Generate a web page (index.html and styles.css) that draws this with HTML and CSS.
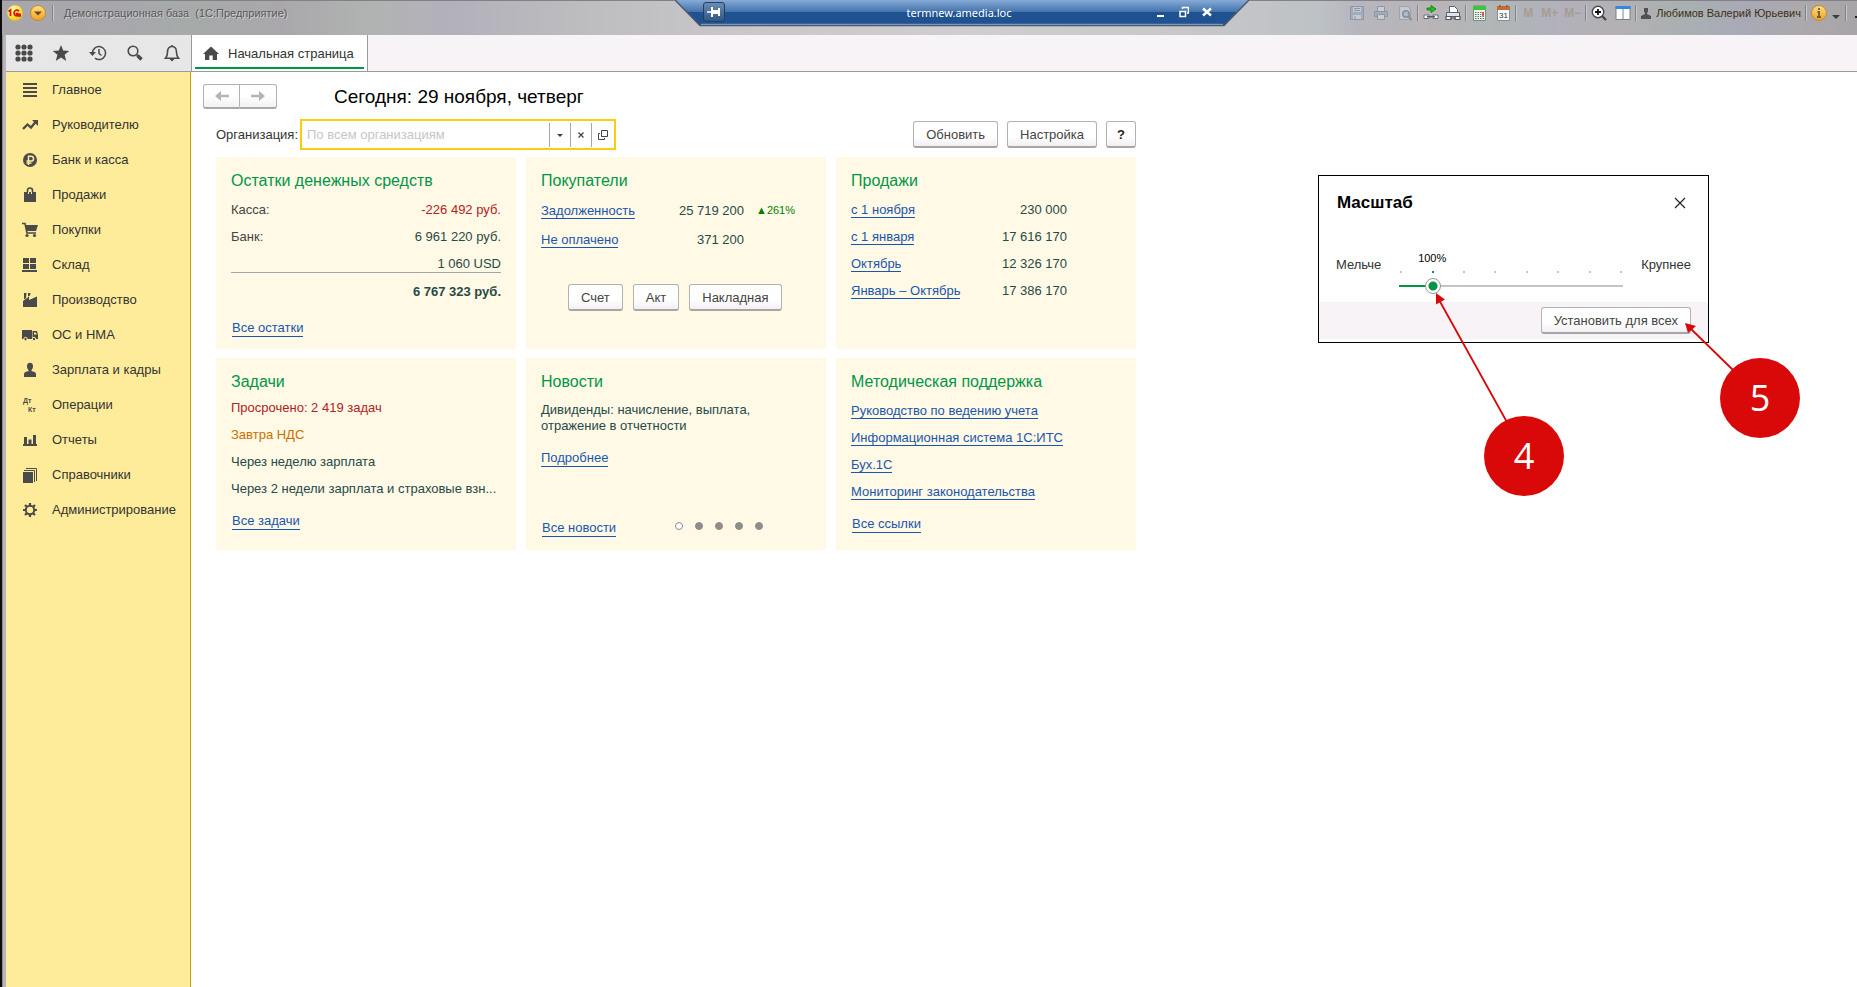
FILE: index.html
```html
<!DOCTYPE html>
<html lang="ru">
<head>
<meta charset="utf-8">
<title>Демонстрационная база (1С:Предприятие)</title>
<link rel="stylesheet" href="styles.css">
</head>
<body>
<div class="window">
  <header class="titlebar">
    <svg class="icon-16" viewBox="0 0 16 16"><defs><radialGradient id="gold" cx=".4" cy=".3" r=".8"><stop offset="0" stop-color="#fffbb0"/><stop offset=".6" stop-color="#ffe232"/><stop offset="1" stop-color="#e8b800"/></radialGradient><linearGradient id="amber" x2="0" y2="1"><stop offset="0" stop-color="#ffdf80"/><stop offset="1" stop-color="#f2a021"/></linearGradient></defs><circle cx="8" cy="8" r="7.7" fill="url(#gold)"/><path d="M1.5 6.5 3.5 5v6M12 6.2C10.500 4.300 7 5 7 8s2 3 7 3M11.500 8.500h-2v.8h4.500" fill="none" stroke="#d9160c" stroke-width="1.700"/></svg>
    <button class="bare menu-button" aria-label="Меню"><svg class="icon-16" viewBox="0 0 16 16"><circle cx="8" cy="8" r="7.500" fill="url(#amber)" stroke="#c58a2d"/><path d="M4 6.500h8L8 10.500z" fill="#6a4a1c"/></svg></button>
    <span class="separator"></span>
    <span class="app-title">Демонстрационная база&nbsp; (1С:Предприятие)</span>
    <div class="system-tools">
      <svg class="icon-16 faded" viewBox="0 0 16 16"><path d="M1.500 1.500h13v13h-13z" fill="#8fa3b7" stroke="#64798f"/><path d="M4 2h8v5H4z" fill="#d5dde5"/><path d="M4 10h8v4H4z" fill="#d5dde5"/><path d="M5 3.500h6M5 5.500h6M6 11v3" stroke="#64798f"/></svg>
      <svg class="icon-16 faded" viewBox="0 0 16 16"><path d="M4.500 6V1.500h7V6" fill="#dfe5ea" stroke="#64798f"/><path d="M1.500 6.500h13v5h-13z" fill="#8fa3b7" stroke="#64798f"/><path d="M4.500 9.500h7v5h-7z" fill="#dfe5ea" stroke="#64798f"/></svg>
      <svg class="icon-16 faded" viewBox="0 0 16 16"><path d="M2.500 1.500h8l3 3v10h-11z" fill="#d5dde5" stroke="#7f93a6"/><circle cx="9" cy="9" r="3.200" fill="#aebdcb" stroke="#4f6a84" stroke-width="1.500"/><path d="m11.500 11.500 3 3.500" stroke="#4f6a84" stroke-width="2"/></svg>
      <span class="separator"></span>
      <svg class="icon-16" viewBox="0 0 16 16"><path d="M4 3h4V.5L13 4 8 7.500V5H4z" fill="#20c512" stroke="#08780a" stroke-width=".8"/><path d="M1 10h5v3.500H1zM10 10h5v3.500h-5z" fill="#fff" stroke="#6a6f7a"/><path d="M4 11.700h8" stroke="#555a66" stroke-width="1.500"/></svg>
      <svg class="icon-16" viewBox="0 0 16 16"><path d="M4.500 9V1.500h5l3 3V9" fill="#fff" stroke="#596375"/><path d="M1.500 7.500h13v4h-13z" fill="#dfe3ea" stroke="#596375"/><path d="M1 11.500h5v3H1zM10 11.500h5v3h-5zM5 13h6" fill="#fff" stroke="#555a66" stroke-width="1.200"/></svg>
      <span class="separator"></span>
      <svg class="icon-16" viewBox="0 0 16 16"><path d="M2.500 1h12v14.500h-12z" fill="#edf2ed" stroke="#76917a"/><path d="M2 1h13v4H2z" fill="#3fc33f"/><path d="M4 7.500h9M4 9.500h9M4 11.500h9M4 13.500h9" stroke="#66786a" stroke-dasharray="1.500 1"/><path d="M12 7v4" stroke="#e33" stroke-width="1.500"/></svg>
      <svg class="icon-16 calendar" viewBox="0 0 16 16"><path d="M2.500 2h12v13.500h-12z" fill="#fafafa" stroke="#8c8c8c"/><path d="M2 1h13v4H2z" fill="#bf6d3b"/><path d="M5 0v2M12 0v2" stroke="#704026"/><text class="calendar-day" x="8.500" y="13" text-anchor="middle">31</text></svg>
      <span class="separator"></span>
      <span class="memory">M</span><span class="memory">M+</span><span class="memory">M−</span>
      <span class="separator"></span>
      <svg class="icon-16" viewBox="0 0 16 16"><circle cx="7" cy="7" r="5.700" fill="#fff" stroke="#484848" stroke-width="1.400"/><path d="M4 7h6M7 4v6" stroke="#111" stroke-width="1.800"/><path d="m11 11 4 4" stroke="#484848" stroke-width="2.400"/></svg>
      <svg class="icon-16 split" viewBox="0 0 16 16"><path d="M1 1.500h14v13H1z" fill="#fff" stroke="#77828e"/><path d="M.5 1h15v3H.5z" fill="#3389df"/><path d="M8 4v11" stroke="#77828e"/></svg>
      <span class="separator"></span>
      <svg class="icon-10" viewBox="0 0 10 12"><path d="M3 1h4v3.500L6 6v1l4 2v3H0V9l4-2V6L3 4.500z" fill="#515151"/></svg>
      <span class="user-name">Любимов Валерий Юрьевич</span>
      <span class="separator"></span>
      <svg class="icon-16" viewBox="0 0 16 16"><circle cx="8" cy="8" r="7.500" fill="url(#amber)" stroke="#b98a3c"/><path d="M8 3v2M6.500 7H8v5M6 12h4" fill="none" stroke="#6b5e4d" stroke-width="1.800"/></svg>
      <svg class="icon-10 drop" viewBox="0 0 10 12"><path d="M1 8h8L5 12z" fill="#3d3d3d"/></svg>
      <span class="separator"></span>
      <svg class="cut-dash" viewBox="0 0 2 16"><path d="M0 11h2v2H0z" fill="#222"/></svg>
    </div>
    <div class="remote-bar">
      <svg class="remote-shape" viewBox="0 0 574 27" preserveAspectRatio="none"><defs><linearGradient id="remote" x2="0" y2="1"><stop offset="0" stop-color="#86aad6"/><stop offset=".45" stop-color="#4474ad"/><stop offset=".46" stop-color="#205190"/><stop offset="1" stop-color="#205190"/></linearGradient></defs><path d="M0 0h574l-25 26H25z" fill="url(#remote)"/><path d="M0 0l25 25.500h524L574 0" fill="none" stroke="#4d596b" stroke-width="1.500"/><path d="M26 24.300h522" stroke="#8da9d0"/></svg>
      <button class="pin" aria-label="Закрепить"><svg class="pin-icon" viewBox="0 0 14 12"><path d="M0 6h5" stroke="#fff" stroke-width="1.500"/><path d="M5 1v10M12 2v8" stroke="#fff" stroke-width="2"/><path d="M5 6h7" stroke="#fff" stroke-width="4"/></svg></button>
      <span class="remote-host">termnew.amedia.loc</span>
      <div class="remote-controls">
        <button class="bare" aria-label="Свернуть"><svg class="icon-10" viewBox="0 0 10 12"><path d="M1 9h7v2H1z" fill="#fff"/></svg></button>
        <button class="bare" aria-label="Восстановить"><svg class="icon-10" viewBox="0 0 10 12"><path d="M1 5.500h5.500v5H1zM3.500 3V1.500h6v5.500H8" fill="none" stroke="#fff" stroke-width="1.500"/></svg></button>
        <button class="bare" aria-label="Закрыть"><svg class="icon-10" viewBox="0 0 10 12"><path d="m1 2.500 8 7M9 2.500l-8 7" stroke="#fff" stroke-width="2.400"/></svg></button>
      </div>
    </div>
  </header>

  <div class="toolbar">
    <div class="quick">
      <button class="bare" aria-label="Функции"><svg class="icon-18" viewBox="0 0 18 18"><g fill="#4a4a4a"><circle cx="3" cy="3" r="2.600"/><circle cx="9" cy="3" r="2.600"/><circle cx="15" cy="3" r="2.600"/><circle cx="3" cy="9" r="2.600"/><circle cx="9" cy="9" r="2.600"/><circle cx="15" cy="9" r="2.600"/><circle cx="3" cy="15" r="2.600"/><circle cx="9" cy="15" r="2.600"/><circle cx="15" cy="15" r="2.600"/></g></svg></button>
      <button class="bare" aria-label="Избранное"><svg class="icon-18" viewBox="0 0 18 18"><path d="m9 1 2.200 5.500 6 .4-4.600 3.900L14.200 17 9 13.600 3.800 17l1.600-6.200L.8 6.900l6-.4z" fill="#4a4a4a"/></svg></button>
      <button class="bare" aria-label="История"><svg class="icon-18" viewBox="0 0 18 18"><path d="M3.500 10.500V9A6.500 6.500 0 1 1 6 14.200" fill="none" stroke="#4a4a4a" stroke-width="1.500"/><path d="M0 8h7l-3.500 4z" fill="#4a4a4a"/><path d="M10 5v4.500l2.500 2" fill="none" stroke="#4a4a4a" stroke-width="1.500"/></svg></button>
      <button class="bare" aria-label="Поиск"><svg class="icon-18" viewBox="0 0 18 18"><circle cx="7" cy="7" r="4.800" fill="none" stroke="#4a4a4a" stroke-width="1.600"/><path d="m10.500 10.500 1.500 1.500" stroke="#4a4a4a" stroke-width="1.500"/><path d="m11.500 11.500 4 4" stroke="#4a4a4a" stroke-width="3.500"/></svg></button>
      <button class="bare" aria-label="Уведомления"><svg class="icon-18" viewBox="0 0 18 18"><path d="M2.500 14.200c2-2 2-3 2-6C4.500 4.500 6 2.500 9 2.500s4.500 2 4.500 5.700c0 3 0 4 2 6z" fill="none" stroke="#4a4a4a" stroke-width="1.600"/><path d="M7.500 2.500a1.500 1.500 0 0 1 3 0M6.500 15h5L9 17.500z" fill="#4a4a4a"/></svg></button>
    </div>
    <button class="tab"><svg class="icon-16" viewBox="0 0 16 16"><path d="M8 1.500 16 9h-2v6H9.700v-4.500H6.300V15H2V9H0z" fill="#4a4a4a"/></svg><span>Начальная страница</span></button>
  </div>

  <div class="workspace">
    <nav class="sidebar">
      <a class="nav-item" href="#"><svg class="icon-16" viewBox="0 0 16 16"><path d="M1 2h14M1 6h14M1 10h14M1 14h14" stroke="#4a4a4a" stroke-width="2"/></svg>Главное</a>
      <a class="nav-item" href="#"><svg class="icon-16" viewBox="0 0 16 16"><path d="m1 12 4.500-4.500 3.500 3 4.500-5.500" fill="none" stroke="#4a4a4a" stroke-width="2.300"/><path d="M10 3h6v6z" fill="#4a4a4a"/></svg>Руководителю</a>
      <a class="nav-item" href="#"><svg class="icon-16" viewBox="0 0 16 16"><circle cx="8" cy="8" r="7" fill="#4a4a4a"/><path d="M6.500 13V4.300h2.700a2.300 2.300 0 0 1 0 4.700H4.500M4.500 11h5" fill="none" stroke="#ffec9a" stroke-width="1.500"/></svg>Банк и касса</a>
      <a class="nav-item" href="#"><svg class="icon-16" viewBox="0 0 16 16"><path d="M2 5h12v10H2z" fill="#4a4a4a"/><path d="M5.500 7.500V3.500Q5.500 1 8 1t2.500 2.500v4" fill="none" stroke="#4a4a4a" stroke-width="1.600"/><path d="M6.500 7V5M9.500 7V5" stroke="#ffec9a"/></svg>Продажи</a>
      <a class="nav-item" href="#"><svg class="icon-16" viewBox="0 0 16 16"><path d="M0 1.500h3l2 9.500h9" fill="none" stroke="#4a4a4a" stroke-width="1.600"/><path d="M3 3h13l-2 6H4.500z" fill="#4a4a4a"/><circle cx="5" cy="13.500" r="1.600" fill="#4a4a4a"/><circle cx="12.500" cy="13.500" r="1.600" fill="#4a4a4a"/></svg>Покупки</a>
      <a class="nav-item" href="#"><svg class="icon-16" viewBox="0 0 16 16"><path d="M1 1h6v5H1zM8 1h6v5H8zM1 7h6v5H1zM8 7h6v5H8zM0 13h15v2H0z" fill="#4a4a4a"/></svg>Склад</a>
      <a class="nav-item" href="#"><svg class="icon-16" viewBox="0 0 16 16"><path d="M1 15V9l6-4.500V8l8-3.500V15z" fill="#4a4a4a"/><path d="M2 1h2.500L4 6 2 7.500zM6 1h2.500L8 3.500 6 4.500z" fill="#4a4a4a"/></svg>Производство</a>
      <a class="nav-item" href="#"><svg class="icon-16" viewBox="0 0 16 16"><path d="M0 3h10v9H0zM10.500 4H15l1 4v4h-5.500z" fill="#4a4a4a"/><path d="M12 5.500h2l.7 2H12z" fill="#ffec9a"/><circle cx="3.500" cy="12" r="1.700" fill="#4a4a4a" stroke="#ffec9a"/><circle cx="12" cy="12" r="1.700" fill="#4a4a4a" stroke="#ffec9a"/></svg>ОС и НМА</a>
      <a class="nav-item" href="#"><svg class="icon-16" viewBox="0 0 16 16"><path d="M8 .8c2 0 3.200 1.500 3 3.700-.1 1.700-.7 2.800-1.500 3.500V9.300c3 .4 4.500 1 4.500 3V15H2v-2.700c0-2 1.500-2.600 4.500-3V8C5.700 7.300 5.100 6.200 5 4.500 4.800 2.300 6 .8 8 .8z" fill="#4a4a4a"/></svg>Зарплата и кадры</a>
      <a class="nav-item" href="#"><svg class="icon-16" viewBox="0 0 16 16"><text class="ledger" x="1" y="6">Дт</text><text class="ledger" x="6" y="15">Кт</text></svg>Операции</a>
      <a class="nav-item" href="#"><svg class="icon-16" viewBox="0 0 16 16"><path d="M1 12h14v2H1zM2 5h3v8H2zM6.500 7.500h3V13h-3zM11 3h3v10h-3z" fill="#4a4a4a"/></svg>Отчеты</a>
      <a class="nav-item" href="#"><svg class="icon-16" viewBox="0 0 16 16"><path d="M1 5h10v11H1z" fill="#4a4a4a"/><path d="M2 3.500h10.500V15M4 1.500h10.500V14" fill="none" stroke="#4a4a4a"/></svg>Справочники</a>
      <a class="nav-item" href="#"><svg class="icon-16" viewBox="0 0 16 16"><circle cx="8" cy="8" r="4.200" fill="none" stroke="#4a4a4a" stroke-width="2"/><path d="M8 1v2.500M8 12.500V15M1 8h2.500M12.500 8H15M3 3l1.800 1.800M11.200 11.200 13 13M13 3l-1.800 1.800M4.800 11.200 3 13" stroke="#4a4a4a" stroke-width="2.200"/></svg>Администрирование</a>
    </nav>

    <main class="page">
      <div class="page-head">
        <div class="history-nav">
          <button class="history-button" aria-label="Назад"><svg class="icon-16" viewBox="0 0 16 16"><path d="M1 8l6-5v3.800h8v2.400H7V13z" fill="#b4b4b4"/></svg></button>
          <button class="history-button" aria-label="Вперед"><svg class="icon-16" viewBox="0 0 16 16"><path d="M15 8 9 3v3.800H1v2.400h8V13z" fill="#b4b4b4"/></svg></button>
        </div>
        <h1 class="page-title">Сегодня: 29 ноября, четверг</h1>
      </div>

      <div class="content">
        <div class="filter-row">
          <label class="filter-label" for="org">Организация:</label>
          <div class="combo">
            <input class="combo-input" id="org" type="text" placeholder="По всем организациям">
            <button class="combo-button" aria-label="Выбрать"><svg class="icon-10" viewBox="0 0 10 12"><path d="M2 5h6L5 8z" fill="#444"/></svg></button>
            <button class="combo-button" aria-label="Очистить"><svg class="icon-10" viewBox="0 0 10 12"><path d="m2.500 3.500 5 5M7.500 3.500l-5 5" stroke="#444" stroke-width="1.200"/></svg></button>
            <button class="combo-button" aria-label="Открыть"><svg class="icon-10" viewBox="0 0 10 12"><path d="M3.500 1.500h6v6h-6zM2 4.500H.5v6h6V9" fill="none" stroke="#444"/></svg></button>
          </div>
          <div class="page-actions">
            <button class="btn">Обновить</button>
            <button class="btn">Настройка</button>
            <button class="btn btn-help">?</button>
          </div>
        </div>

        <div class="cards">
          <section class="card">
            <h2 class="card-title">Остатки денежных средств</h2>
            <table class="figures">
              <tr><th>Касса:</th><td class="negative">-226 492 руб.</td></tr>
              <tr><th>Банк:</th><td>6 961 220 руб.</td></tr>
              <tr class="last"><th></th><td>1 060 USD</td></tr>
              <tr class="total"><th></th><td>6 767 323 руб.</td></tr>
            </table>
            <a class="link more more-balance" href="#">Все остатки</a>
          </section>

          <section class="card">
            <h2 class="card-title">Покупатели</h2>
            <table class="figures buyers">
              <tr><th><a class="link" href="#">Задолженность</a></th><td>25 719 200</td><td class="growth">▲261%</td></tr>
              <tr><th><a class="link" href="#">Не оплачено</a></th><td>371 200</td><td class="growth"></td></tr>
            </table>
            <div class="card-actions">
              <button class="btn">Счет</button>
              <button class="btn">Акт</button>
              <button class="btn">Накладная</button>
            </div>
          </section>

          <section class="card">
            <h2 class="card-title">Продажи</h2>
            <table class="figures sales">
              <tr><th><a class="link" href="#">с 1 ноября</a></th><td>230 000</td></tr>
              <tr><th><a class="link" href="#">с 1 января</a></th><td>17 616 170</td></tr>
              <tr><th><a class="link" href="#">Октябрь</a></th><td>12 326 170</td></tr>
              <tr><th><a class="link" href="#">Январь – Октябрь</a></th><td>17 386 170</td></tr>
            </table>
          </section>

          <section class="card">
            <h2 class="card-title">Задачи</h2>
            <ul class="list">
              <li class="negative">Просрочено: 2 419 задач</li>
              <li class="warning">Завтра НДС</li>
              <li>Через неделю зарплата</li>
              <li>Через 2 недели зарплата и страховые взн...</li>
            </ul>
            <a class="link more" href="#">Все задачи</a>
          </section>

          <section class="card">
            <h2 class="card-title">Новости</h2>
            <p class="news">Дивиденды: начисление, выплата,<br>отражение в отчетности</p>
            <a class="link news-more" href="#">Подробнее</a>
            <div class="news-foot">
              <a class="link" href="#">Все новости</a>
              <div class="dots">
                <button class="dot dot-current" aria-label="1"></button>
                <button class="dot" aria-label="2"></button>
                <button class="dot" aria-label="3"></button>
                <button class="dot" aria-label="4"></button>
                <button class="dot" aria-label="5"></button>
              </div>
            </div>
          </section>

          <section class="card">
            <h2 class="card-title">Методическая поддержка</h2>
            <ul class="list support">
              <li><a class="link" href="#">Руководство по ведению учета</a></li>
              <li><a class="link" href="#">Информационная система 1С:ИТС</a></li>
              <li><a class="link" href="#">Бух.1С</a></li>
              <li><a class="link" href="#">Мониторинг законодательства</a></li>
            </ul>
            <a class="link more" href="#">Все ссылки</a>
          </section>
        </div>
      </div>

      <div class="scale-layer">
        <section class="dialog" role="dialog" aria-labelledby="scale-title">
          <div class="dialog-head">
            <h2 class="dialog-title" id="scale-title">Масштаб</h2>
            <button class="bare" aria-label="Закрыть"><svg class="icon-12" viewBox="0 0 12 12"><path d="m1 1 10 10M11 1 1 11" stroke="#222" stroke-width="1.200"/></svg></button>
          </div>
          <div class="scale-row">
            <label for="scale">Мельче</label>
            <div class="slider">
              <output class="scale-value" for="scale">100%</output>
              <div class="ticks"><i></i><i class="active"></i><i></i><i></i><i></i><i></i><i></i><i></i></div>
              <input class="range" id="scale" type="range" min="0" max="7" value="1">
            </div>
            <span>Крупнее</span>
          </div>
          <div class="dialog-foot"><button class="btn">Установить для всех</button></div>
        </section>
        <svg class="arrows" viewBox="0 0 482 322"><g stroke="#d90909" stroke-width="1.800" fill="#d90909"><path d="M120 123 190 249M370 151 416 196"/><path d="m118 118 9 6.500-9 5zM367 148l11 3-8 7z" stroke="none"/></g></svg>
        <span class="badge badge-4">4</span>
        <span class="badge badge-5">5</span>
      </div>
    </main>
  </div>
</div>
</body>
</html>
```
FILE: styles.css
```css
* {
  box-sizing: border-box;
}

body {
  margin: 0;
  background: #fff;
  color: #333;
  font: 13px/17px "Liberation Sans", Arial, sans-serif;
}

button,
input {
  font: inherit;
  color: inherit;
}

h1,
h2,
p,
ul {
  margin: 0;
  padding: 0;
}

svg {
  display: block;
  flex: none;
}

.icon-10 { width: 10px; height: 12px; }
.icon-12 { width: 12px; height: 12px; }
.icon-16 { width: 16px; height: 16px; }
.icon-18 { width: 18px; height: 18px; }

.bare {
  display: flex;
  padding: 0;
  border: 0;
  background: none;
}

.window {
  display: flex;
  flex-direction: column;
  min-height: 100vh;
  border-left: 2px solid #0c0c0c;
  box-shadow: inset 1px 0 #8f8a90, inset 4px 0 #b8b4b9;
  padding-left: 4px;
}

/* Title bar */

.titlebar {
  position: relative;
  display: flex;
  align-items: center;
  height: 35px;
  margin-left: -4px;
  padding: 0 0 10px 5px;
  border-top: 1px solid #858087;
  background: linear-gradient(90deg, #a8a6aa 0, #a7a7ac 6%, #a6aaa9 10%, #a9a7ab 15%, #b1b3b2 20%, #b2b1bb 24%, #bebdbf 32%, #c9c7ca 40%, #cecdcf 52%, #c9c8ca 62%, #c2c4c7 68%, #bcc2c5 71%, #b7b6be 73%, #b9b5b7 77%, #afb6b8 81%, #b2b1bc 84%, #b3b1b3 87%, #a8b0b2 91%, #a9a9b7 94%, #aba9ac 97%, #a7a5a8 100%);
}

.menu-button {
  margin-left: 7px;
}

.separator {
  width: 2px;
  height: 16px;
  border-left: 1px solid #858287;
  border-right: 1px solid #c9c7ca;
}

.titlebar > .separator {
  margin-left: 6px;
}

.app-title {
  margin-left: 10px;
  color: #5a5859;
  font-size: 11px;
  text-shadow: 1px 1px #cfcdd0;
}

.system-tools {
  display: flex;
  align-items: center;
  gap: 6px;
  margin-left: auto;
}

.system-tools .separator {
  margin: 0 -2px;
}

.faded {
  opacity: 0.5;
}

.faded + .faded,
.calendar,
.split {
  margin-left: 2px;
}

.calendar-day {
  font: 8px "Liberation Sans", Arial, sans-serif;
  fill: #333;
}

.memory {
  min-width: 14px;
  color: #a89c93;
  font-weight: bold;
  font-size: 12px;
  text-align: center;
}

.user-name {
  margin-left: -1px;
  color: #40300f;
  font-size: 11px;
}

.drop {
  margin-left: -2px;
}

.cut-dash {
  width: 2px;
  height: 16px;
  margin-left: 4px;
}

.remote-bar {
  position: absolute;
  top: -1px;
  left: 50%;
  width: 574px;
  height: 27px;
  margin-left: -255px;
  display: flex;
  align-items: center;
  justify-content: space-between;
  padding: 0 37px 3px 28px;
  color: #fff;
}

.remote-shape {
  position: absolute;
  inset: 0;
  width: 100%;
  height: 100%;
}

.pin,
.remote-host,
.remote-controls {
  position: relative;
}

.pin {
  display: flex;
  align-items: center;
  justify-content: center;
  width: 22px;
  height: 20px;
  padding: 0;
  border: 1px solid #23405f;
  border-radius: 3px;
  background: linear-gradient(#6c8cb1, #2f5687);
}

.pin-icon {
  width: 14px;
  height: 12px;
}

.remote-host {
  margin-left: 38px;
  padding-top: 2px;
  font: 11px/16px "Noto Sans", "Open Sans", sans-serif;
}

.remote-controls {
  display: flex;
  gap: 13px;
}

/* Section toolbar */

.toolbar {
  display: flex;
  height: 37px;
  border-bottom: 1px solid #9e999e;
  background: #f7f3f7;
}

.quick {
  display: flex;
  align-items: center;
  justify-content: space-between;
  width: 186px;
  padding: 0 10px 0 9px;
  border-right: 1px solid #9e999e;
  background: #e7e7e7;
}

.tab {
  display: flex;
  align-items: center;
  gap: 9px;
  width: 176px;
  padding: 0 0 0 11px;
  border: 0;
  border-right: 1px solid #9e999e;
  background: linear-gradient(#009646, #009646) 3px 32px / 169px 2px no-repeat #fff;
}

/* Workspace */

.workspace {
  display: flex;
  flex: 1;
}

.sidebar {
  width: 185px;
  flex: none;
  border-right: 1px solid #bfa300;
  background: #ffec9a;
}

.nav-item {
  display: flex;
  align-items: center;
  gap: 14px;
  height: 35px;
  padding-left: 16px;
  color: #333;
  text-decoration: none;
}

.ledger {
  font: bold 7px "Liberation Sans", Arial, sans-serif;
  fill: #4a4a4a;
}

.page {
  position: relative;
  flex: 1;
  min-width: 0;
  padding: 12px;
  background: #fff;
}

.page-head {
  display: flex;
  align-items: center;
  gap: 57px;
}

.history-nav {
  display: flex;
}

.history-button {
  display: flex;
  align-items: center;
  justify-content: center;
  width: 37px;
  height: 25px;
  padding: 0;
  border: 1px solid #b3b3b3;
  border-bottom: 2px solid #a8a8a8;
  border-radius: 3px 0 0 3px;
  background: linear-gradient(#fff 50%, #f3f0f3);
}

.history-button + .history-button {
  border-left: 0;
  border-radius: 0 3px 3px 0;
}

.page-title {
  color: #000;
  font-size: 19px;
  font-weight: normal;
  line-height: 22px;
}

.content {
  max-width: 933px;
  padding: 10px 0 0 13px;
}

.filter-row {
  display: flex;
  align-items: center;
}

.filter-label {
  width: 84px;
  white-space: nowrap;
}

.combo {
  display: flex;
  align-items: center;
  width: 316px;
  height: 31px;
  border: 2px solid #ffcb0f;
}

.combo-input {
  flex: 1;
  min-width: 0;
  padding: 0 5px;
  border: 0;
  outline: 0;
  background: none;
}

.combo-input::placeholder {
  color: #c6c6c6;
  opacity: 1;
}

.combo-button {
  display: flex;
  align-items: center;
  justify-content: center;
  width: 21px;
  height: 24px;
  padding: 0;
  border: 0;
  border-left: 1px solid #a6a6a6;
  background: none;
}

.combo-button:last-child {
  width: 23px;
}

.page-actions {
  display: flex;
  gap: 9px;
  margin-left: auto;
}

.btn {
  height: 27px;
  padding: 0 12px;
  border: 1px solid #b3b3b3;
  border-bottom: 2px solid #a6a6a6;
  border-radius: 3px;
  background: linear-gradient(#fff 60%, #f3eff3);
  color: #444;
  white-space: nowrap;
}

.btn-help {
  padding: 0 10px;
  color: #222;
  font-weight: bold;
}

.cards {
  display: grid;
  grid-template-columns: repeat(3, 1fr);
  gap: 9px 10px;
  margin-top: 7px;
}

.card {
  min-height: 192px;
  padding: 14px 15px 12px;
  background: #fff9e6;
  color: #264a47;
}

.card-title {
  color: #009646;
  font-size: 16px;
  font-weight: normal;
  line-height: 20px;
}

.link {
  color: #1a56ad;
  border-bottom: 1px solid #1a56ad;
  text-decoration: none;
}

.figures {
  width: 100%;
  margin-top: 5px;
  border-collapse: collapse;
}

.figures th,
.figures td {
  padding: 5px 0;
  font-weight: normal;
  text-align: right;
}

.figures th {
  color: #444;
  text-align: left;
}

.figures .last > * {
  padding-bottom: 0;
  border-bottom: 1px solid #a5a5a5;
}

.figures .total td {
  padding-top: 10px;
  font-weight: bold;
}

.figures.buyers th,
.figures.buyers td {
  padding: 6px 0;
}

.figures.buyers .growth {
  width: 67px;
  padding-left: 12px;
  color: #008000;
  font-size: 11px;
  text-align: left;
}

.figures.sales {
  width: 216px;
}

.negative,
.figures .negative {
  color: #b22222;
}

.warning {
  color: #cd6f00;
}

.card-actions {
  display: flex;
  gap: 10px;
  margin-top: 30px;
  padding-left: 27px;
}

.list {
  margin-top: 2px;
  list-style: none;
  line-height: 27px;
  white-space: nowrap;
}

.support {
  margin-top: 5px;
}

.more {
  display: inline-block;
  margin: 11px 0 0 1px;
  line-height: 16px;
}

.more-balance {
  margin-top: 15px;
}

.news {
  margin-top: 10px;
  line-height: 16px;
}

.news-more {
  display: inline-block;
  margin-top: 16px;
  line-height: 16px;
}

.news-foot {
  display: flex;
  align-items: flex-start;
  justify-content: space-between;
  margin-top: 53px;
  padding: 0 48px 0 1px;
  line-height: 16px;
}

.dots {
  display: flex;
  gap: 12px;
  padding-top: 2px;
}

.dot {
  width: 8px;
  height: 8px;
  padding: 0;
  border: 1px solid #8f8c8c;
  border-radius: 50%;
  background: #8f8c8c;
}

.dot-current {
  background: #fff;
}

/* Scale dialog with callouts */

.scale-layer {
  position: absolute;
  top: 103px;
  right: 57px;
  width: 482px;
  height: 322px;
}

.dialog {
  width: 391px;
  border: 1px solid #000;
  background: #fff;
}

.dialog-head {
  display: flex;
  align-items: center;
  justify-content: space-between;
  padding: 16px 22px 0 18px;
}

.dialog-title {
  color: #000;
  font-size: 17px;
  line-height: 22px;
}

.scale-row {
  display: flex;
  align-items: center;
  justify-content: space-between;
  padding: 21px 17px 8px;
}

.slider {
  display: flex;
  flex-direction: column;
  width: 236px;
  padding-top: 16px;
}

.scale-value {
  width: 78px;
  color: #000;
  font-size: 11px;
  line-height: 14px;
  text-align: center;
}

.ticks {
  display: flex;
  justify-content: space-between;
  padding: 6px 7px;
}

.ticks i {
  width: 2px;
  height: 2px;
  background: #c4c4c4;
}

.ticks .active {
  background: #009646;
}

.range {
  width: 100%;
  height: 16px;
  margin: -1px 0 0;
  appearance: none;
  background: none;
}

.range::-webkit-slider-runnable-track {
  height: 16px;
  background: linear-gradient(90deg, #009646 33px, #c4c4c4 33px) center / calc(100% - 12px) 2px no-repeat;
}

.range::-webkit-slider-thumb {
  appearance: none;
  width: 16px;
  height: 16px;
  border: 1px solid #999;
  border-radius: 50%;
  background: radial-gradient(circle, #009646 4px, #fff 5px);
}

.dialog-foot {
  display: flex;
  justify-content: flex-end;
  margin-bottom: 3px;
  padding: 5px 17px;
  background: #f7f3f7;
}

.arrows {
  position: absolute;
  inset: 0;
  width: 482px;
  height: 322px;
  pointer-events: none;
}

.badge {
  position: absolute;
  width: 80px;
  height: 80px;
  border-radius: 50%;
  background: #d90909;
  color: #fff;
  font: 36px/80px "Open Sans", "Noto Sans", sans-serif;
  text-align: center;
}

.badge-4 {
  left: 166px;
  top: 241px;
}

.badge-5 {
  left: 402px;
  top: 183px;
}
```
